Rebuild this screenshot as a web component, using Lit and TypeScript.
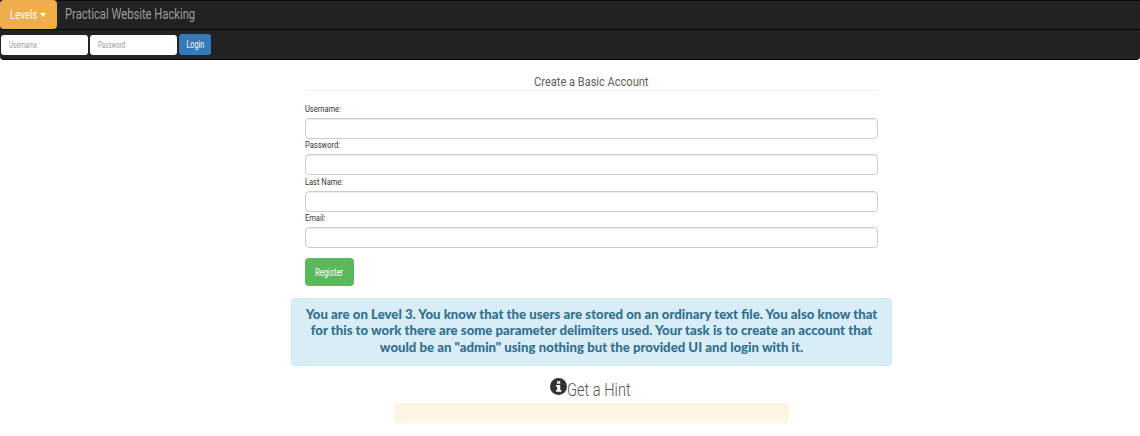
import { LitElement, html, css } from "lit";
import { customElement } from "lit/decorators.js";

const FIELDS = ["Username:", "Password:", "Last Name:", "Email:"];

@customElement("app-root")
export class AppRoot extends LitElement {
  static styles = css`
    :host { display: block; height: 436px; overflow: hidden; background: #fff; font-family: Roboto, sans-serif; color: #333; }
    .sq { display: inline-block; white-space: nowrap; }
    .nav { background: #222; border-top: 1px solid #080808; border-bottom: 1px solid #080808; border-radius: 0 0 4px 4px; height: 58px; display: flex; flex-direction: column; }
    .top { height: 28px; display: flex; align-items: stretch; border-bottom: 1px solid #080808; }
    .levels { width: 57px; margin-top: -1px; height: 29px; background: #f0ad4e; border-radius: 4px; color: #fff; font-size: 12px; display: flex; align-items: center; gap: 4px; padding-left: 10px; box-sizing: border-box; }
    .levels .sq { width: 26px; transform: scaleX(.8); transform-origin: left; }
    .caret { width: 0; height: 0; border-left: 3.5px solid transparent; border-right: 3.5px solid transparent; border-top: 4px solid #fff; }
    .brand { margin-left: 8px; color: #9d9d9d; font-size: 14px; line-height: 26px; }
    .brand .sq { transform: scaleX(.8); transform-origin: left; }
    .bottom { display: flex; align-items: center; gap: 2px; padding: 4px 0 0 1px; }
    .nav-in { width: 87px; height: 20px; box-sizing: border-box; background: #fff; border-radius: 3px; color: #999; font-size: 9.5px; padding-left: 8px; line-height: 19px; }
    .nav-in .sq { transform: scaleX(.65); transform-origin: left; }
    .login { width: 32px; height: 21px; background: #337ab7; border-radius: 3px; color: #fff; font-size: 10px; display: flex; align-items: center; justify-content: center; }
    .login .sq { transform: scaleX(.72); }
    .main { width: 573px; margin-left: 305px; }
    h4 { margin: 14px 0 0; height: 16px; border-bottom: 1px solid #eee; font-weight: 400; font-size: 13px; line-height: 15px; text-align: center; color: #5f5f5f; }
    h4 .sq { transform: scaleX(.85); }
    .field label { display: block; font-size: 9.5px; font-weight: 400; line-height: 12px; color: #333; margin-bottom: 3px; }
    .field label .sq { transform: scaleX(.79); transform-origin: left; }
    .fields { padding-top: 12px; display: flex; flex-direction: column; }
    .field { height: 36.4px; }
    .box { height: 21px; box-sizing: border-box; border: 1px solid #ccc; border-radius: 4px; box-shadow: inset 0 1px 1px rgba(0,0,0,.075); }
    .register { margin-top: 9px; width: 49px; height: 28px; background: #5cb85c; border-radius: 4px; color: #fff; font-size: 11.5px; display: flex; align-items: center; justify-content: center; }
    .register .sq { transform: scaleX(.67); }
    .alert { width: 601px; box-sizing: border-box; margin: 12px 0 0 -14px; height: 68px; background: #d9edf7; border: 1px solid #d0e9f4; border-radius: 4px; color: #31708f; text-align: center; font-family: Lato, sans-serif; font-weight: 900; font-size: 13.2px; line-height: 16.5px; padding-top: 7px; white-space: nowrap; }
    .hint { display: flex; align-items: center; justify-content: center; font-size: 19px; color: #555; margin-top: 12px; height: 24px; }
    .hint svg { width: 17px; height: 17px; margin-top: -6px; flex: none; margin-left: -1px; }
    .hint .sq { width: 65px; transform: scaleX(.77); transform-origin: left; font-weight: 300; }
    .well { width: 395px; height: 20px; background: #fdf6e3; border-radius: 3px; margin: 1px 0 0 89px; }
  `;
  render() {
    return html`
      <div class="nav">
        <div class="top">
          <div class="levels"><span class="sq">Levels</span><span class="caret"></span></div>
          <div class="brand"><span class="sq">Practical Website Hacking</span></div>
        </div>
        <div class="bottom">
          <div class="nav-in"><span class="sq">Username</span></div>
          <div class="nav-in"><span class="sq">Password</span></div>
          <div class="login"><span class="sq">Login</span></div>
        </div>
      </div>
      <div class="main">
        <h4><span class="sq">Create a Basic Account</span></h4>
        <div class="fields">
          ${FIELDS.map((f) => html`<div class="field"><label><span class="sq">${f}</span></label><div class="box"></div></div>`)}
        </div>
        <div class="register"><span class="sq">Register</span></div>
        <div class="alert">You are on Level 3. You know that the users are stored on an ordinary text file. You also know that<br />for this to work there are some parameter delimiters used. Your task is to create an account that<br />would be an "admin" using nothing but the provided UI and login with it.</div>
        <div class="hint">
          <svg viewBox="0 0 24 24"><circle cx="12" cy="12" r="12" fill="#333"></circle><rect x="10" y="4.5" width="4.4" height="3.6" fill="#fff"></rect><path d="M8.5 10h5.9v7h1.6v2.5H8.5V17h1.6v-4.5H8.5z" fill="#fff"></path></svg>
          <span class="sq">Get a Hint</span>
        </div>
        <div class="well"></div>
      </div>
    `;
  }
}
